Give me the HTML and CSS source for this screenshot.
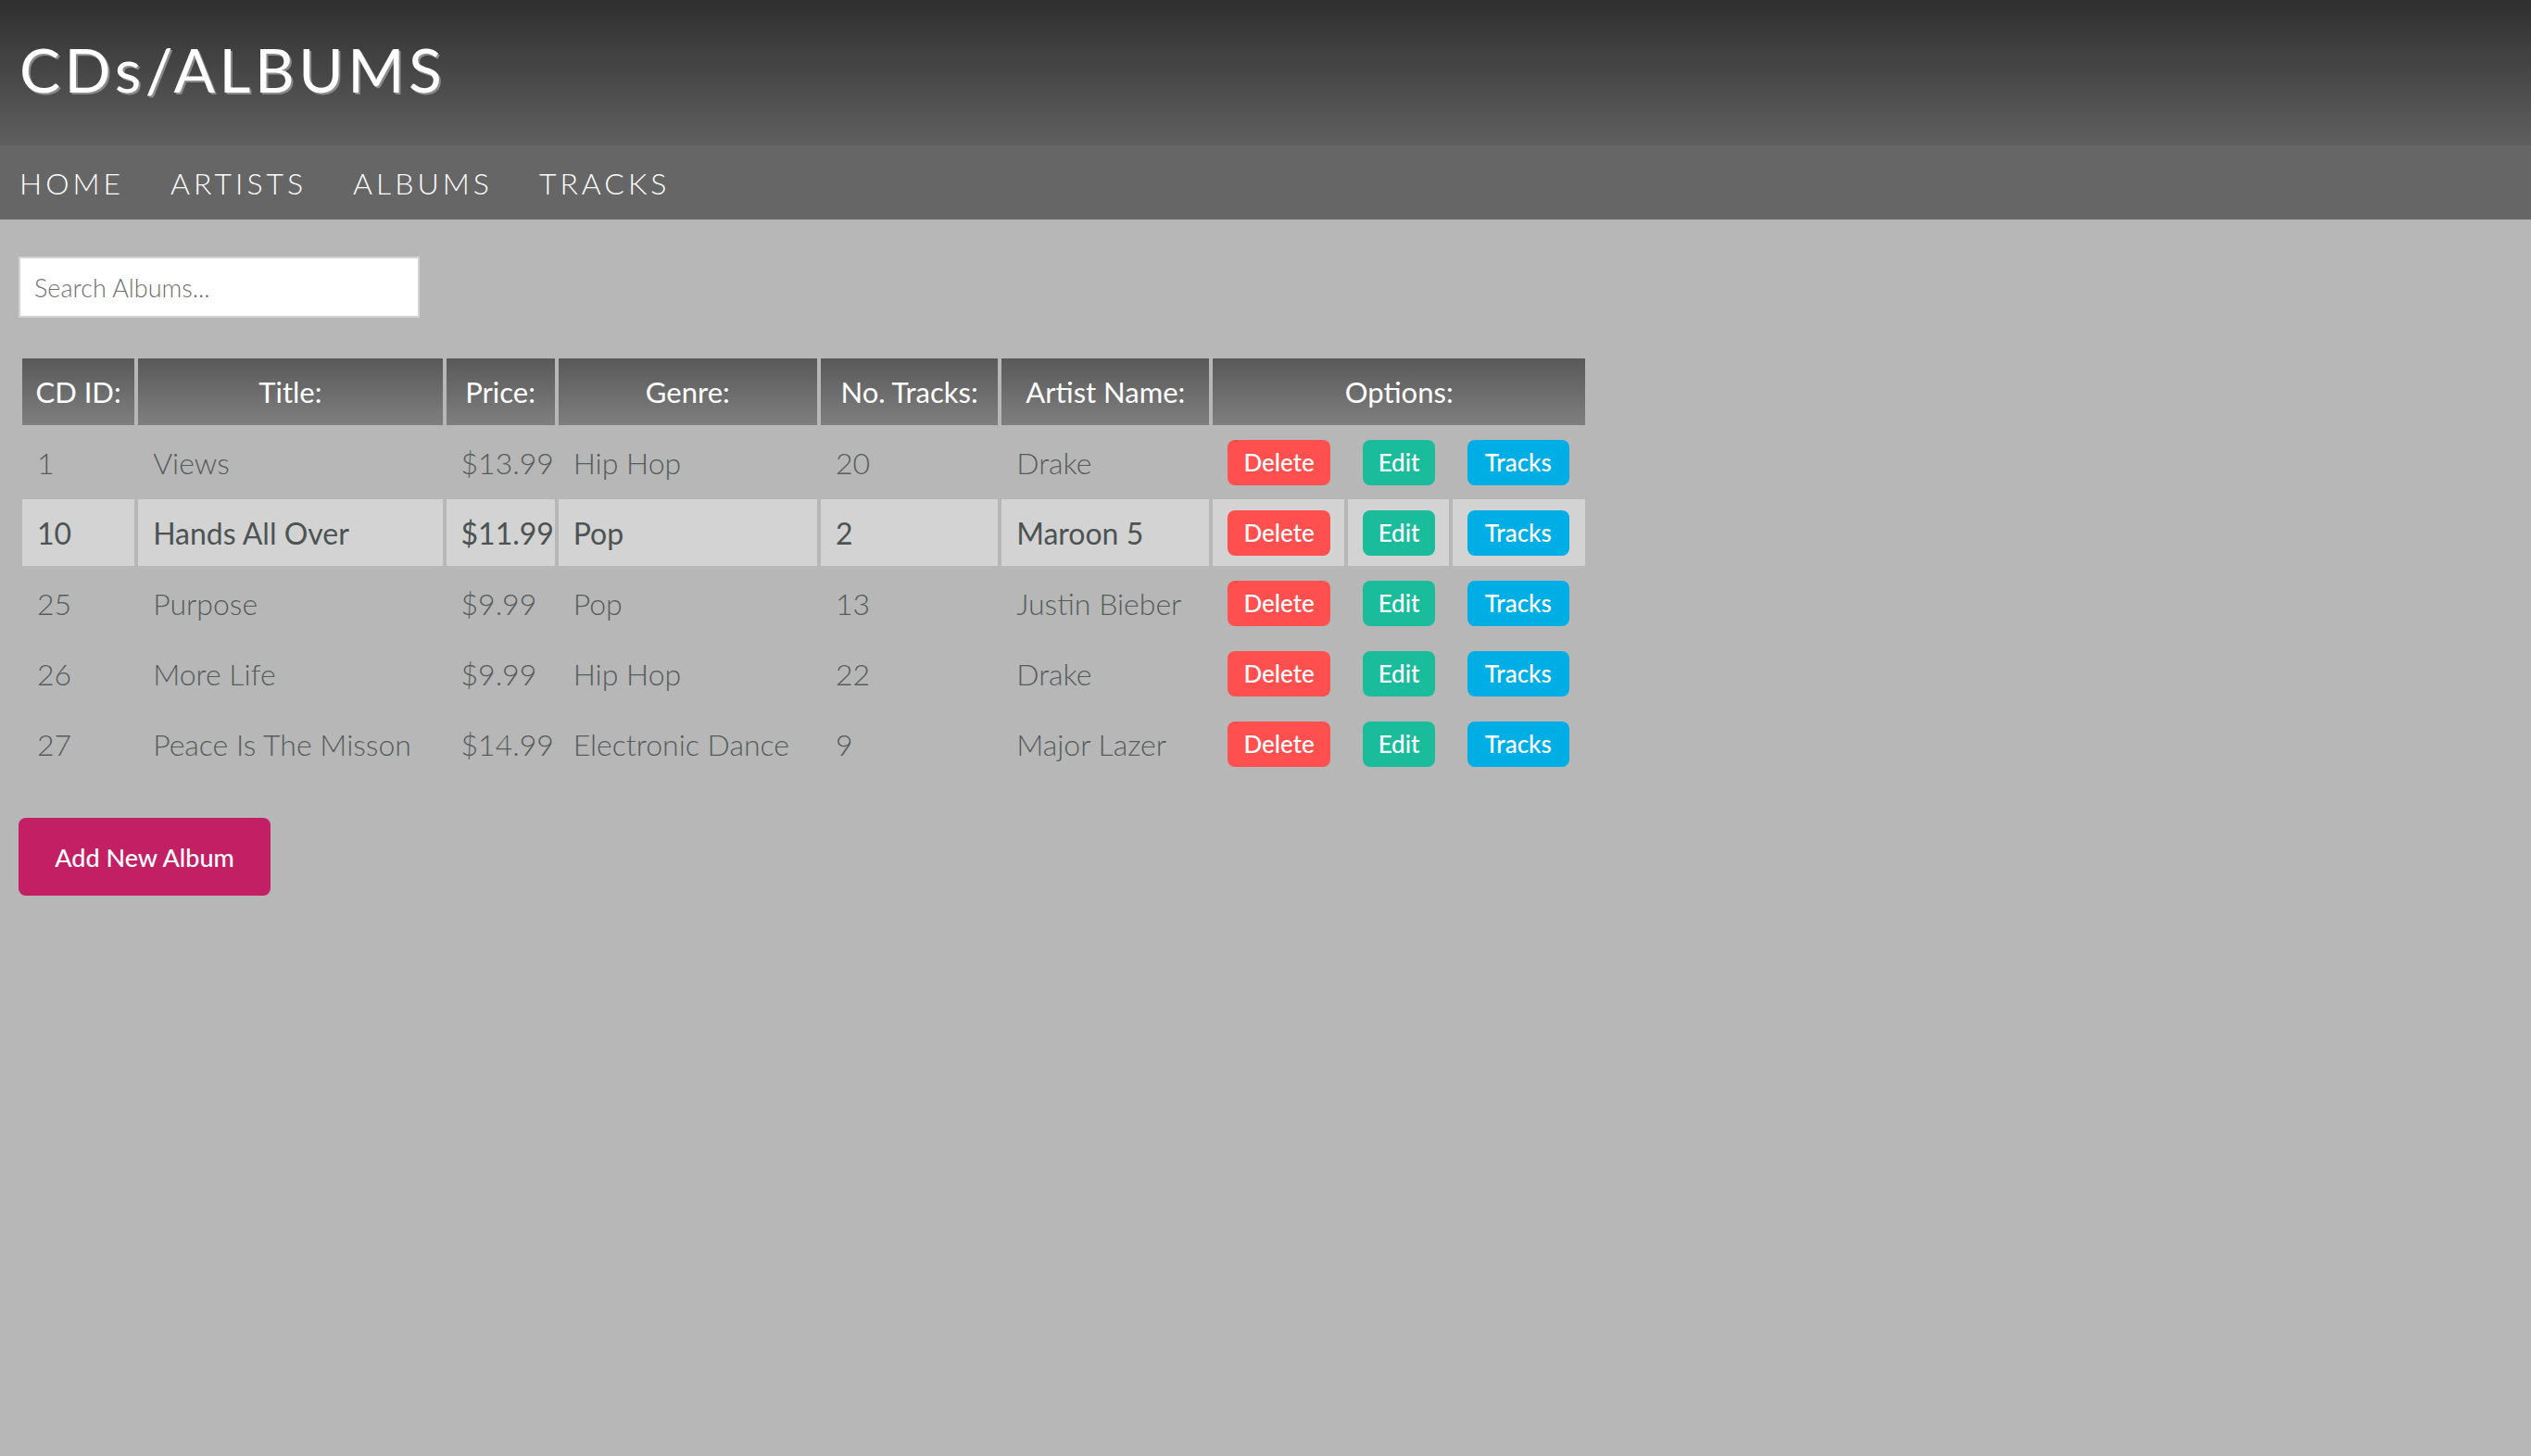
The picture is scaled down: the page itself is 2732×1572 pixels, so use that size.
FILE: index.html
```html
<!DOCTYPE html>
<html lang="en">
<head>
<meta charset="utf-8">
<title>CDs/ALBUMS</title>
<link rel="stylesheet" href="styles.css">
</head>
<body>
<header class="masthead">
  <h1 class="site-title">CDs/ALBUMS</h1>
</header>
<nav class="main-nav">
  <a href="#" class="nav-link">HOME</a>
  <a href="#" class="nav-link">ARTISTS</a>
  <a href="#" class="nav-link">ALBUMS</a>
  <a href="#" class="nav-link">TRACKS</a>
</nav>
<main class="content">
  <input class="search" type="text" placeholder="Search Albums...">
  <table class="albums">
    <colgroup>
      <col class="c-id"><col class="c-title"><col class="c-price"><col class="c-genre"><col class="c-num"><col class="c-artist"><col class="c-del"><col class="c-edit"><col class="c-tracks">
    </colgroup>
    <thead>
      <tr>
        <th>CD ID:</th><th>Title:</th><th>Price:</th><th>Genre:</th><th>No. Tracks:</th><th>Artist Name:</th><th colspan="3">Options:</th>
      </tr>
    </thead>
    <tbody>
      <tr>
        <td>1</td><td>Views</td><td>$13.99</td><td>Hip Hop</td><td>20</td><td>Drake</td>
        <td><button class="btn btn-delete">Delete</button></td><td><button class="btn btn-edit">Edit</button></td><td><button class="btn btn-tracks">Tracks</button></td>
      </tr>
      <tr class="hover">
        <td>10</td><td>Hands All Over</td><td>$11.99</td><td>Pop</td><td>2</td><td>Maroon 5</td>
        <td><button class="btn btn-delete">Delete</button></td><td><button class="btn btn-edit">Edit</button></td><td><button class="btn btn-tracks">Tracks</button></td>
      </tr>
      <tr>
        <td>25</td><td>Purpose</td><td>$9.99</td><td>Pop</td><td>13</td><td>Justin Bieber</td>
        <td><button class="btn btn-delete">Delete</button></td><td><button class="btn btn-edit">Edit</button></td><td><button class="btn btn-tracks">Tracks</button></td>
      </tr>
      <tr>
        <td>26</td><td>More Life</td><td>$9.99</td><td>Hip Hop</td><td>22</td><td>Drake</td>
        <td><button class="btn btn-delete">Delete</button></td><td><button class="btn btn-edit">Edit</button></td><td><button class="btn btn-tracks">Tracks</button></td>
      </tr>
      <tr>
        <td>27</td><td>Peace Is The Misson</td><td>$14.99</td><td>Electronic Dance</td><td>9</td><td>Major Lazer</td>
        <td><button class="btn btn-delete">Delete</button></td><td><button class="btn btn-edit">Edit</button></td><td><button class="btn btn-tracks">Tracks</button></td>
      </tr>
    </tbody>
  </table>
  <button class="btn-add">Add New Album</button>
</main>
</body>
</html>
```
FILE: styles.css
```css
html, body {
  margin: 0;
  padding: 0;
}
body {
  background: #b7b7b7;
  font-family: "Lato", "Noto Sans", sans-serif;
  min-height: 1572px;
}
.masthead {
  height: 157px;
  background: linear-gradient(to bottom, #2f2f2f, #5f5f5f);
  padding: 0 21px;
  box-sizing: border-box;
  display: flex;
  align-items: center;
}
.site-title {
  margin: 0;
  color: #fff;
  font-weight: 400;
  font-size: 66px;
  letter-spacing: 4.5px;
  text-shadow: 2px 2px 0 #8a8a8a;
  line-height: 1;
  margin-top: -8px;
}
.main-nav {
  height: 80px;
  background: #666666;
  display: flex;
  align-items: center;
  padding-left: 21px;
  gap: 50px;
}
.nav-link {
  color: #fff;
  text-decoration: none;
  font-size: 32px;
  letter-spacing: 4px;
  font-weight: 300;
}
.content {
  padding: 40px 20px;
  display: flex;
  flex-direction: column;
  align-items: flex-start;
}
.search {
  width: 433px;
  height: 66px;
  box-sizing: border-box;
  border: 2px solid #d3d3d3;
  background: #fff;
  padding: 0 15px;
  font-family: inherit;
  font-size: 27px;
  font-weight: 300;
  outline: none;
}
.search::placeholder {
  color: #707070;
}
.albums {
  margin-top: 40px;
  border-spacing: 4px;
  table-layout: fixed;
  width: 1695px;
}
.c-id { width: 121px; }
.c-title { width: 328px; }
.c-price { width: 117px; }
.c-genre { width: 279px; }
.c-num { width: 191px; }
.c-artist { width: 224px; }
.c-del { width: 141px; }
.c-edit { width: 109px; }
.c-tracks { width: 143px; }
.albums th,
.albums td {
  box-sizing: border-box;
  height: 72px;
  padding: 0 16px;
  font-size: 32px;
  white-space: nowrap;
}
.albums th {
  background: linear-gradient(to bottom, #595959, #7f7f7f);
  color: #fff;
  font-weight: 400;
  font-size: 31px;
  text-align: center;
  padding: 0 6px;
}
.albums td {
  color: #565c5c;
  font-weight: 300;
  text-align: left;
}
.albums tr.hover td {
  background: #d3d3d3;
  color: #4d5353;
  font-weight: 400;
}
.btn {
  border: none;
  border-radius: 8px;
  height: 49px;
  padding: 0 17px;
  color: #fff;
  font-family: inherit;
  font-size: 26px;
  font-weight: 500;
  cursor: pointer;
  display: block;
}
.btn-delete { background: #ff4f4f; }
.btn-edit { background: #1abc9c; }
.btn-tracks { background: #00aee6; padding: 0 19px; }
.btn-add {
  margin-top: 40px;
  width: 272px;
  height: 84px;
  border: none;
  border-radius: 8px;
  background: #c21f65;
  color: #fff;
  font-family: inherit;
  font-size: 27px;
  font-weight: 500;
}
```
